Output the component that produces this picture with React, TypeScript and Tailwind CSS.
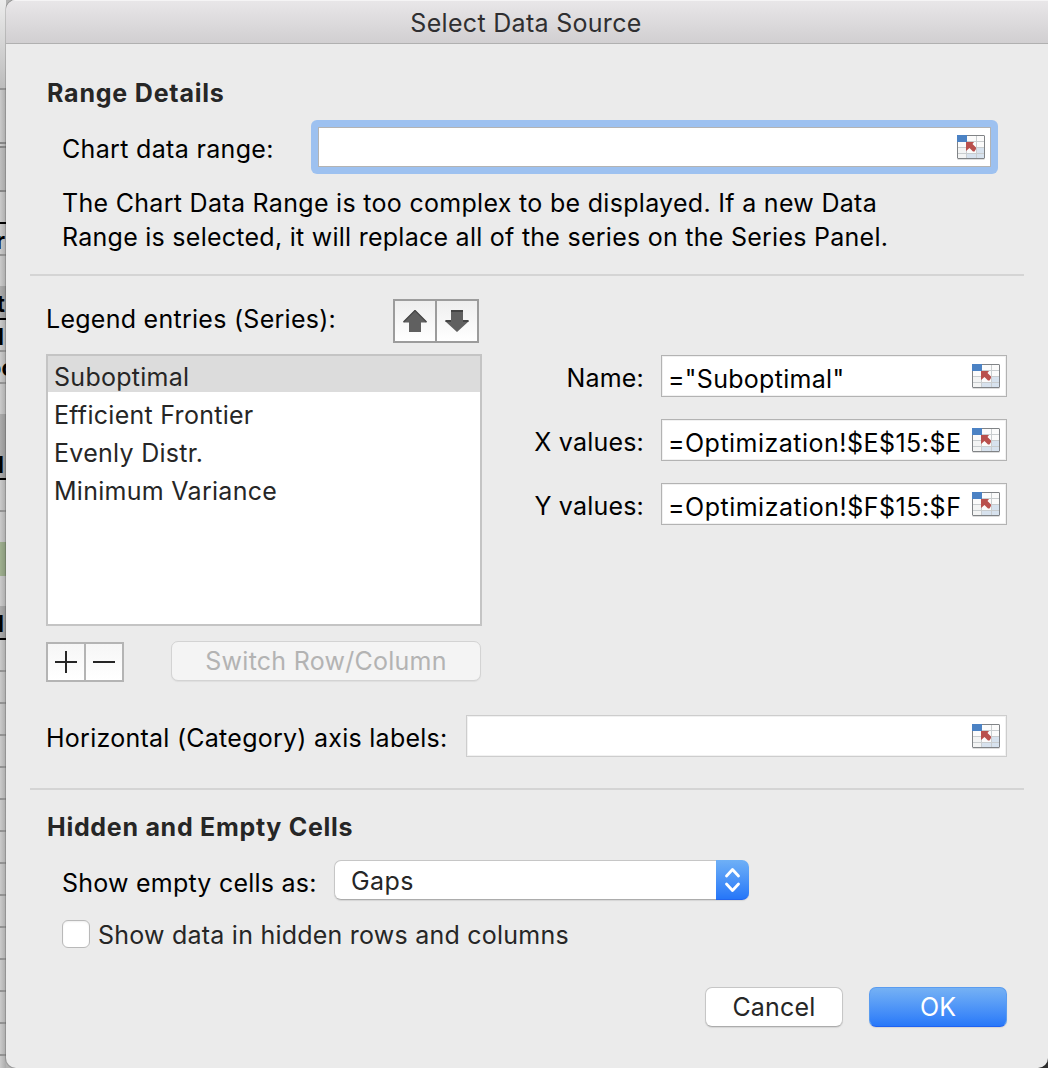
import React from "react";

function RangeIcon() {
  return (
    <svg width="28" height="25" viewBox="0 0 28 25" className="block shrink-0">
      <rect x="0.5" y="0.5" width="27" height="23" rx="0.5" fill="#fbfbfb" />
      <rect x="1" y="12" width="9" height="11" fill="#f3f4f4" />
      <rect x="19" y="12" width="8" height="11" fill="#d7e2ee" />
      <rect x="10" y="18" width="10" height="5" fill="#d7e2ee" />
      <path d="M1 12.5H27M1 18.5H27M10 6.5H27M9.5 7V23M19.5 1V23" stroke="#c9cdcf" fill="none" />
      <rect x="0.5" y="0.5" width="27" height="23" rx="0.5" fill="none" stroke="#808386" />
      <rect x="0" y="0" width="10" height="7" fill="#4b82c4" />
      <path d="M9 7H17L15.5 9L19 12.5V14L17.5 16.5H16L12.5 13L9 16Z" fill="#b9504d" />
      <path d="M0.5 24.5H27.5" stroke="#dedede" />
    </svg>
  );
}

function RangeField({ value, className }: { value?: string; className: string }) {
  return (
    <div
      className={
        "flex h-[42px] items-start overflow-hidden border bg-white pt-2 pr-[6px] pl-[6px] shadow-[inset_0_0_0_1px_#f1f1f1] " +
        className
      }
    >
      <span className="-mt-[2px] w-[296px] overflow-hidden whitespace-nowrap">{value}</span>
      <span className="ml-auto">
        <RangeIcon />
      </span>
    </div>
  );
}

type Band = { h: string; look: string; text?: string; shift?: string };

const plain = "bg-linear-to-r from-[#cbcbcb] to-[#ababab]";
const shaded = "bg-linear-to-r from-[#acacac] to-[#929292]";
const line = "bg-[#929292]";
const black = "bg-black";

const bands: Band[] = [
  { h: "h-[88px]", look: "bg-linear-to-b from-[#ececec] to-[#bdbdbd]" },
  { h: "h-[2px]", look: line },
  { h: "h-[52px]", look: plain },
  { h: "h-[2px]", look: "bg-[#858585]" },
  { h: "h-[2px]", look: plain },
  { h: "h-[2px]", look: "bg-[#858585]" },
  { h: "h-[42px]", look: "bg-linear-to-r from-[#bfbfbf] to-[#a5a5a5]" },
  { h: "h-[2px]", look: "bg-[#858585]" },
  { h: "h-[30px]", look: plain },
  { h: "h-[2px]", look: black },
  { h: "h-[30px]", look: plain, text: "r", shift: "mr-px" },
  { h: "h-[2px]", look: line },
  { h: "h-[30px]", look: plain },
  { h: "h-[32px]", look: shaded, text: "t", shift: "mr-px pt-px" },
  { h: "h-[2px]", look: black },
  { h: "h-[30px]", look: plain, text: "l", shift: "mr-[2px]" },
  { h: "h-[2px]", look: line },
  { h: "h-[30px]", look: plain, text: "oc", shift: "-mr-[9px] -mt-px" },
  { h: "h-[2px]", look: line },
  { h: "h-[30px]", look: plain },
  { h: "h-[34px]", look: shaded },
  { h: "h-[30px]", look: shaded, text: "l", shift: "mr-[2px]" },
  { h: "h-[2px]", look: black },
  { h: "h-[30px]", look: plain },
  { h: "h-[2px]", look: line },
  { h: "h-[30px]", look: plain },
  { h: "h-[34px]", look: "bg-linear-to-r from-[#9fb08f] to-[#87967a]" },
  { h: "h-[30px]", look: plain },
  { h: "h-[32px]", look: shaded, text: "l", shift: "mr-[2px] pt-px" },
  { h: "h-[2px]", look: black },
  { h: "h-[30px]", look: plain },
];

const lowerRows = Array.from({ length: 13 }, (_, i) => i);

function SheetEdge() {
  return (
    <div className="h-[1068px] w-[6px] shrink-0 overflow-hidden">
      {bands.map((b, i) => (
        <div key={i} className={"flex justify-end overflow-hidden " + b.h + " " + b.look}>
          {b.text && (
            <span className={"text-[23px] leading-[34px] font-bold text-black " + b.shift}>{b.text}</span>
          )}
        </div>
      ))}
      {lowerRows.map((i) => (
        <div key={i} className="h-8 border-t-2 border-[#929292] bg-linear-to-r from-[#cbcbcb] to-[#ababab]" />
      ))}
    </div>
  );
}

const series = ["Suboptimal", "Efficient Frontier", "Evenly Distr.", "Minimum Variance"];

const fields = [
  { label: "Name:", value: '="Suboptimal"', tracking: "tracking-[0.3px]" },
  { label: "X values:", value: "=Optimization!$E$15:$E", tracking: "tracking-[0.48px]" },
  { label: "Y values:", value: "=Optimization!$F$15:$F", tracking: "tracking-[0.5px]" },
];

export default function App() {
  return (
    <div className="flex h-[1068px] w-[1048px] overflow-hidden bg-linear-to-r from-[#b5b5b5] to-[#303030] font-['Inter',sans-serif] text-[25px] leading-[34px] text-black">
      <SheetEdge />
      <div className="flex h-[1068px] w-[1042px] flex-col overflow-hidden rounded-tl-[10px] rounded-b-[10px] bg-[#ebebeb] shadow-[0_0_0_1px_rgba(0,0,0,0.15)]">
        <header className="h-11 shrink-0 border-b border-[#b0b0b0] bg-linear-to-b from-[#e9e7e9] to-[#d1cfd1] pt-[6px] text-center text-[#2f2f31] shadow-[inset_0_1px_0_#f5f4f5]">
          <span className="-ml-[2px] tracking-[0.3px]">Select Data Source</span>
        </header>

        <section className="h-[230px] shrink-0 pt-8 pl-10">
          <h2 className="pl-px font-bold tracking-[0.8px] text-[#262626]">Range Details</h2>
          <div className="mt-[10px] flex h-[54px] pl-4">
            <label className="w-[249px] pt-3 tracking-[0.33px]">Chart data range:</label>
            <div className="h-[54px] w-[687px] rounded-[6px] bg-[#9dc1f0] p-[7px]">
              <div className="flex h-10 justify-end border border-[#b3b3b3] bg-white pt-[7px] pr-[5px]">
                <RangeIcon />
              </div>
            </div>
          </div>
          <p className="mt-3 w-[900px] pl-4">
            <span className="tracking-[0.3px]">
              The Chart Data Range is too complex to be displayed. If a new Data
            </span>
            <br />
            <span className="tracking-[0.26px]">
              Range is selected, it will replace all of the series on the Series Panel.
            </span>
          </p>
        </section>

        <div className="mr-6 ml-6 h-[2px] shrink-0 bg-[#d4d4d4]" />

        <section className="flex h-[406px] shrink-0 pl-10">
          <div className="w-[436px]">
            <div className="flex h-[78px] items-start justify-between pt-[23px] pr-[3px]">
              <span className="pt-[3px] tracking-[0.27px]">Legend entries (Series):</span>
              <div className="flex h-11 w-[86px] border-2 border-[#9c9c9c] bg-linear-to-b from-[#eeeeee] via-[#f7f7f7] to-white">
                <div className="flex w-[42px] items-center justify-center border-r-2 border-[#9c9c9c]">
                  <svg width="24" height="22" viewBox="0 0 24 22">
                    <path d="M12 0L23.5 11.5V12.5H18V22H6V12.5H0.5V11.5Z" fill="#606060" />
                    <path d="M12 0.5L23.5 12M12 0.5L0.5 12" stroke="#4a4a4a" strokeWidth="1.4" />
                  </svg>
                </div>
                <div className="flex w-[40px] items-center justify-center">
                  <svg width="24" height="22" viewBox="0 0 24 22">
                    <path d="M12 22L23.5 11.5V10.5H18V0H6V10.5H0.5V11.5Z" fill="#606060" />
                    <path d="M6 1H18M0.5 11H6M18 11H23.5" stroke="#444" strokeWidth="2" />
                  </svg>
                </div>
              </div>
            </div>
            <ul className="h-[272px] border-2 border-[#c4c4c4] bg-white tracking-[0.28px] text-[#262626]">
              {series.map((s, i) => (
                <li
                  key={s}
                  className={i === 0 ? "h-9 bg-[#dcdcdc] pt-1 pl-[6px]" : "h-[38px] pt-[6px] pl-[6px]"}
                >
                  {s}
                </li>
              ))}
            </ul>
            <div className="mt-[15px] flex justify-between pr-[1px]">
              <div className="mt-px flex h-10 w-[78px] border-2 border-[#b4b4b4] bg-linear-to-b from-[#f6f6f6] to-white">
                <div className="w-[38px] border-r-2 border-[#b4b4b4]">
                  <svg width="36" height="36" viewBox="0 0 36 36">
                    <path d="M7 18H29M18 7V29" stroke="#262626" strokeWidth="2" />
                  </svg>
                </div>
                <svg width="36" height="36" viewBox="0 0 36 36">
                  <path d="M7 18H29" stroke="#262626" strokeWidth="2" />
                </svg>
              </div>
              <button className="h-10 w-[310px] rounded-[7px] border border-[#d3d3d3] bg-[#f4f4f4] tracking-[0.25px] text-[#b3b3b3] shadow-[0_1px_1px_#dedede]">
                Switch Row/Column
              </button>
            </div>
          </div>

          <div className="flex flex-col gap-[22px] pt-[79px]">
            {fields.map((f) => (
              <div key={f.label} className="flex">
                <label className="w-[162px] pt-[6px] text-right tracking-[0.2px]">{f.label}</label>
                <RangeField value={f.value} className={"ml-[17px] w-[346px] border-[#b3b3b3] " + f.tracking} />
              </div>
            ))}
          </div>
        </section>

        <section className="flex h-[106px] shrink-0 pt-[33px] pl-10">
          <label className="w-[420px] pt-[6px] tracking-[0.26px]">Horizontal (Category) axis labels:</label>
          <RangeField className="w-[541px] border-[#cdcdcd]" />
        </section>

        <div className="mr-6 ml-6 h-[2px] shrink-0 bg-[#d4d4d4]" />

        <section className="pt-5 pl-10">
          <h2 className="pl-px font-bold tracking-[0.72px] text-[#262626]">Hidden and Empty Cells</h2>
          <div className="mt-4 flex h-10 pl-4">
            <label className="w-[272px] pt-[6px] tracking-[0.23px]">Show empty cells as:</label>
            <div className="flex h-10 w-[415px] rounded-[7px] shadow-[0_1px_1px_#d5d5d5]">
              <span className="flex-1 rounded-l-[7px] border border-r-0 border-[#c6c6c6] border-b-[#acacac] bg-white pt-[3px] pl-[16px] tracking-[0.4px] text-[#262626]">
                Gaps
              </span>
              <div className="w-[33px] rounded-r-[7px] border-b border-[#2266ee] bg-linear-to-b from-[#6fb0f6] to-[#2676f8]">
                <svg width="33" height="39" viewBox="0 0 33 39" fill="none">
                  <path
                    d="M10.5 16L16.5 9.5L22.5 16M10.5 24L16.5 30.5L22.5 24"
                    stroke="white"
                    strokeWidth="2.8"
                    strokeLinecap="round"
                    strokeLinejoin="round"
                  />
                </svg>
              </div>
            </div>
          </div>
          <div className="mt-5 flex pl-4">
            <div className="h-7 w-7 rounded-[6px] border border-[#b9b9b9] bg-white shadow-[inset_0_1px_2px_#eeeeee]" />
            <label className="-mt-[2px] ml-2 tracking-[0.23px] text-[#262626]">
              Show data in hidden rows and columns
            </label>
          </div>
        </section>

        <footer className="mt-[35px] flex justify-end gap-[26px] pr-[41px]">
          <button className="h-10 w-[138px] rounded-[7px] border border-[#c6c6c6] border-b-[#acacac] bg-white tracking-[0.2px] text-[#262626] shadow-[0_1px_1px_#d5d5d5]">
            Cancel
          </button>
          <button className="h-10 w-[138px] rounded-[7px] border border-[#5a9cf0] border-b-[#1f62f2] bg-linear-to-b from-[#75b1f4] to-[#2878f9] text-white shadow-[0_1px_1px_#d5d5d5]">
            OK
          </button>
        </footer>
      </div>
    </div>
  );
}
